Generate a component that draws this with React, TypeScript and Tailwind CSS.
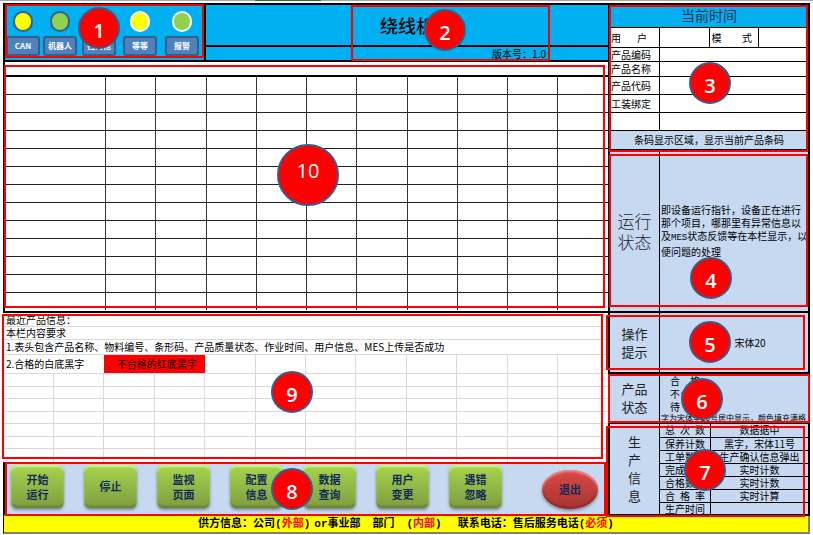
import type { ReactNode } from "react";

function Marker({ n, className, large = false }: { n: number; className: string; large?: boolean }) {
  return (
    <span
      className={`absolute z-20 flex items-center justify-center rounded-full border-2 border-[#385d8a] bg-[#ff0000] font-['Open_Sans',sans-serif] text-[20px] text-white ${
        large ? "size-[62px] pb-2 font-medium" : "size-[42px] pt-[6px] font-semibold"
      } ${className}`}
    >
      {n}
    </span>
  );
}

function Frame({ className }: { className: string }) {
  return <div className={`pointer-events-none absolute z-10 border-2 border-[#ff0000] ${className}`} />;
}

const lamps = [
  { label: "CAN", lamp: "border-[#385d8a] bg-[#ffff00]" },
  { label: "机器人", lamp: "border-[#385d8a] bg-[#92d050]" },
  { label: "扫码枪", lamp: "border-[#385d8a] bg-[#ffff00]" },
  { label: "等等", lamp: "border-white bg-[#ffff00]" },
  { label: "报警", lamp: "border-white bg-[#92d050]" },
];

function Header() {
  return (
    <header className="flex h-[59px] border-y-2 border-l-2 border-black bg-[#00b0f0]">
      <div className="relative w-[201px] shrink-0 border-r-2 border-black">
        <div className="grid grid-cols-[37px_39px_41px_42px_33px] pt-[6px] pl-[1px]">
          {lamps.map((l) => (
            <div key={l.label} className="flex w-[34px] flex-col items-center gap-1">
              <span className={`h-[21px] w-[20px] rounded-full border-2 ${l.lamp}`} />
              <button
                type="button"
                className="h-5 w-full rounded-[3px] border-2 border-[#385d8a] bg-[#4f81bd] text-[8px] leading-4 font-bold whitespace-nowrap text-white"
              >
                {l.label}
              </button>
            </div>
          ))}
        </div>
        <Frame className="-top-px right-0 bottom-[2px] left-0" />
        <Marker n={1} className="top-[2px] left-[73px]" />
      </div>
      <div className="relative flex min-w-0 flex-1 flex-col">
        <h1 className="flex flex-1 items-center justify-center border-b-2 border-black text-[18px] font-medium">
          绕线机
        </h1>
        <p className="h-[13px] pr-[62px] text-right text-[10px] leading-[13px]">版本号：1.0</p>
        <Frame className="top-0 right-[58px] -bottom-px left-[145px]" />
        <Marker n={2} className="top-[4px] left-[218px]" />
      </div>
    </header>
  );
}

function MainTable() {
  return (
    <section className="relative h-[251px] border-b-2 border-l-2 border-black">
      <table className="w-full table-fixed border-collapse">
        <colgroup>
          <col className="w-1/6" />
          <col span={10} />
        </colgroup>
        <thead>
          <tr className="h-[14px] border-b-2 border-black">
            <th colSpan={11} className="p-0" />
          </tr>
        </thead>
        <tbody>
          {Array.from({ length: 13 }, (_, r) => (
            <tr key={r} className="h-[18px] border-b border-[#222222] last:border-b-0">
              {Array.from({ length: 11 }, (_, c) => (
                <td key={c} className="border-r border-[#333333] p-0 last:border-r-0" />
              ))}
            </tr>
          ))}
        </tbody>
      </table>
      <Frame className="top-[3px] right-[3px] bottom-[3px] -left-px" />
      <Marker n={10} large className="top-[82px] left-[272px]" />
    </section>
  );
}

function RecentProducts() {
  return (
    <section className="relative h-[149px] bg-white pt-px">
      <table className="w-full table-fixed border-collapse text-[10px] leading-[12px] whitespace-nowrap">
        <colgroup>
          <col span={12} />
        </colgroup>
        <tbody>
          <tr className="h-[12px] border-b border-[#d9d9d9]">
            <td colSpan={12} className="p-0 pl-[3px]">最近产品信息：</td>
          </tr>
          <tr className="h-[12px] border-b border-[#d9d9d9]">
            <td colSpan={12} className="p-0 pl-[3px]">本栏内容要求</td>
          </tr>
          <tr className="h-[15px] border-b border-[#d9d9d9]">
            <td colSpan={12} className="p-0 pl-[3px]">
              1.表头包含产品名称、物料编号、条形码、产品质量状态、作业时间、用户信息、MES上传是否成功
            </td>
          </tr>
          <tr className="h-[19px] border-b border-[#d9d9d9]">
            <td colSpan={2} className="p-0 pl-[3px]">2.合格的白底黑字</td>
            <td colSpan={2} className="bg-[#ff0000] p-0 pl-[3px]">、不合格的红底黑字</td>
            {Array.from({ length: 8 }, (_, c) => (
              <td key={c} className="border-r border-[#d9d9d9] p-0 last:border-r-0" />
            ))}
          </tr>
          {Array.from({ length: 7 }, (_, r) => (
            <tr key={r} className="h-[13px] border-b border-[#d9d9d9] last:border-b-0 even:h-[12px]">
              {Array.from({ length: 12 }, (_, c) => (
                <td key={c} className="border-r border-[#d9d9d9] p-0 last:border-r-0" />
              ))}
            </tr>
          ))}
        </tbody>
      </table>
      <Frame className="top-px right-[5px] bottom-[3px] -left-px" />
      <Marker n={9} className="top-[58px] left-[268px]" />
    </section>
  );
}

const actions = [["开始", "运行"], ["停止"], ["监视", "页面"], ["配置", "信息"], ["数据", "查询"], ["用户", "变更"], ["遇错", "忽略"]];

function Controls() {
  return (
    <section className="relative flex h-[54px] items-start border-t border-b-2 border-l-2 border-t-black border-b-[#666666] border-l-black bg-[#c6d9f1] pt-[2px] pr-[10px] pl-[6px]">
      <div className="flex gap-5">
        {actions.map((lines) => (
          <button
            key={lines[0]}
            type="button"
            className="flex h-[43px] w-[53px] flex-col items-center justify-center rounded-[6px] bg-linear-to-b from-[#a5d64c] to-[#7f9c40] text-[11px] leading-[15px] font-bold text-[#10295a] shadow-[inset_0_2px_2px_#d3f58a,inset_0_-2px_2px_#66822d,0_2px_3px_#7c8796]"
          >
            {lines.map((t) => (
              <span key={t}>{t}</span>
            ))}
          </button>
        ))}
      </div>
      <button
        type="button"
        className="ml-auto h-[39px] w-[56px] self-center rounded-[50%] bg-linear-to-b from-[#d94a48] to-[#a83432] text-[11px] font-bold text-[#10295a] shadow-[inset_0_2px_2px_#ec8a88,inset_0_-2px_2px_#8a2a28,0_2px_3px_#7c8796]"
      >
        退出
      </button>
      <Frame className="-top-px right-px -bottom-[2px] left-0 border-r-3" />
      <Marker n={8} className="top-[5px] left-[266px]" />
    </section>
  );
}

function Spread({ text, className = "" }: { text: string; className?: string }) {
  return (
    <span className={`flex justify-between ${className}`}>
      {text.split("").map((ch) => (
        <span key={ch}>{ch}</span>
      ))}
    </span>
  );
}

const productFields = [
  { label: "产品编码", h: "h-[14px]" },
  { label: "产品名称", h: "h-[15px]" },
  { label: "产品代码", h: "h-[18px]" },
  { label: "工装绑定", h: "h-[18px]" },
  { label: "", h: "h-[18px]" },
];

function ProductInfo() {
  return (
    <section className="relative flex h-[147px] flex-col border-t-2 border-black">
      <h2 className="h-[22px] bg-[#00b0f0] text-center text-[14px] leading-[20px] text-[#17304f]">当前时间</h2>
      <table className="w-full flex-1 table-fixed border-collapse border-y border-black bg-white text-[10px] leading-[12px] whitespace-nowrap">
        <tbody>
          <tr className="h-[20px] border-b border-black">
            <th scope="row" className="border-r border-black p-0 font-normal">
              <Spread text="用户" className="pr-3 pl-px" />
            </th>
            <td className="border-r border-black p-0" />
            <th scope="row" className="border-r border-black p-0 font-normal">
              <Spread text="模式" className="pr-[6px] pl-[2px]" />
            </th>
            <td className="p-0" />
          </tr>
          {productFields.map((f) => (
            <tr key={f.label} className={`border-b border-black ${f.h}`}>
              <th scope="row" className="border-r border-black p-0 pl-px text-left font-normal">{f.label}</th>
              <td colSpan={3} className="p-0" />
            </tr>
          ))}
          <tr className="h-[19px] bg-[#c6d9f1]">
            <td colSpan={4} className="p-0 text-center">条码显示区域，显示当前产品条码</td>
          </tr>
        </tbody>
      </table>
      <Frame className="top-0 right-0 -bottom-[2px] -left-px" />
      <Marker n={3} className="top-[57px] left-[79px]" />
    </section>
  );
}

function Panel({ title, titleClass, className, children }: { title: string[]; titleClass: string; className: string; children: ReactNode }) {
  return (
    <section className={`relative flex border-b-2 border-black bg-[#c6d9f1] ${className}`}>
      <h2
        className={`flex w-[50px] shrink-0 flex-col items-center justify-center border-r border-black text-[#222222] ${titleClass}`}
      >
        {title.map((t) => (
          <span key={t}>{t}</span>
        ))}
      </h2>
      {children}
    </section>
  );
}

const production = [
  ["总次数", "数据据中"],
  ["保养计数", "黑字，宋体11号"],
  ["工单数量", "生产确认信息弹出"],
  ["完成数量", "实时计数"],
  ["合格数量", "实时计数"],
  ["合格率", "实时计算"],
  ["生产时间", ""],
];

function Sidebar() {
  return (
    <aside className="w-[202px] shrink-0 border-x-2 border-black">
      <ProductInfo />
      <Panel title={["运行", "状态"]} titleClass="text-[17px] leading-[21px] font-light" className="h-[163px]">
        <p className="flex flex-col justify-center pl-px text-[10px] leading-[13px] whitespace-nowrap">
          <span>即设备运行指针，设备正在进行</span>
          <span>那个项目，哪那里有异常信息以</span>
          <span>
            及<span className="font-['Liberation_Mono',monospace] text-[9px]">MES</span>状态反馈等在本栏显示，以
          </span>
          <span>便问题的处理</span>
        </p>
        <Frame className="top-1 right-0 bottom-1 -left-px" />
        <Marker n={4} className="top-[107px] left-[80px]" />
      </Panel>
      <Panel title={["操作", "提示"]} titleClass="text-[13px] leading-[18px]" className="h-[61px]">
        <p className="flex flex-1 items-center justify-center pl-8 text-[10px]">宋体20</p>
        <Frame className="top-[2px] right-[3px] bottom-[2px] -left-1" />
        <Marker n={5} className="top-[8px] left-[79px]" />
      </Panel>
      <Panel title={["产品", "状态"]} titleClass="text-[13px] leading-[18px]" className="h-[50px]">
        <div className="min-w-0 flex-1 overflow-hidden text-[10px] leading-[13px] whitespace-nowrap">
          <ul className="pl-[10px]">
            <li>合　格</li>
            <li>不合格</li>
            <li>待　检</li>
          </ul>
          <p className="pl-px text-[8px] leading-[9px]">字为宋体字20号居中显示，颜色填充满格</p>
        </div>
        <Frame className="top-0 -right-[2px] -bottom-px -left-[2px]" />
        <Marker n={6} className="top-[4px] left-[71px]" />
      </Panel>
      <Panel title={["生", "产", "信", "息"]} titleClass="text-[13px] leading-[18px]" className="h-[92px]">
        <table className="flex-1 table-fixed border-collapse text-[10px] leading-[12px] whitespace-nowrap">
          <colgroup>
            <col className="w-[50px]" />
            <col />
          </colgroup>
          <tbody>
            {production.map(([label, value]) => (
              <tr key={label} className="h-[13px] border-b border-black last:border-b-0">
                <th scope="row" className="border-r border-black p-0 font-normal">
                  <Spread text={label} className="px-[5px]" />
                </th>
                <td className="p-0 text-center">{value}</td>
              </tr>
            ))}
          </tbody>
        </table>
        <Frame className="top-[2px] right-[3px] -bottom-[3px] -left-1" />
        <Marker n={7} className="top-[25px] left-[74px]" />
      </Panel>
    </aside>
  );
}

function Red({ children }: { children: ReactNode }) {
  return <span className="text-[#ff0000]">{children}</span>;
}

export default function App() {
  return (
    <div className="bg-white px-[3px] font-['Noto_Sans_CJK_SC',sans-serif] text-black">
      <div className="-mx-[3px] h-[3px] border-t border-[#a6a6a6]">
        <div className="-mt-px ml-[255px] h-px w-[66px] bg-[#217346]" />
      </div>
      <div className="flex">
        <main className="min-w-0 flex-1">
          <Header />
          <MainTable />
          <RecentProducts />
          <Controls />
        </main>
        <Sidebar />
      </div>
      <footer className="flex h-[18px] justify-center border-r-2 border-b-2 border-l border-[#7f7f7f] border-l-black bg-[#ffff00] font-['Liberation_Mono','Noto_Sans_CJK_SC',monospace] text-[11px] leading-[16px] font-bold whitespace-nowrap">
        <span className="pr-1">供方信息：公司(<Red>外部</Red>)</span>
        <span className="pr-3">or事业部</span>
        <span className="pr-3">部门</span>
        <span className="pr-4">(<Red>内部</Red>)</span>
        <span>联系电话：售后服务电话(<Red>必须</Red>)</span>
      </footer>
    </div>
  );
}
